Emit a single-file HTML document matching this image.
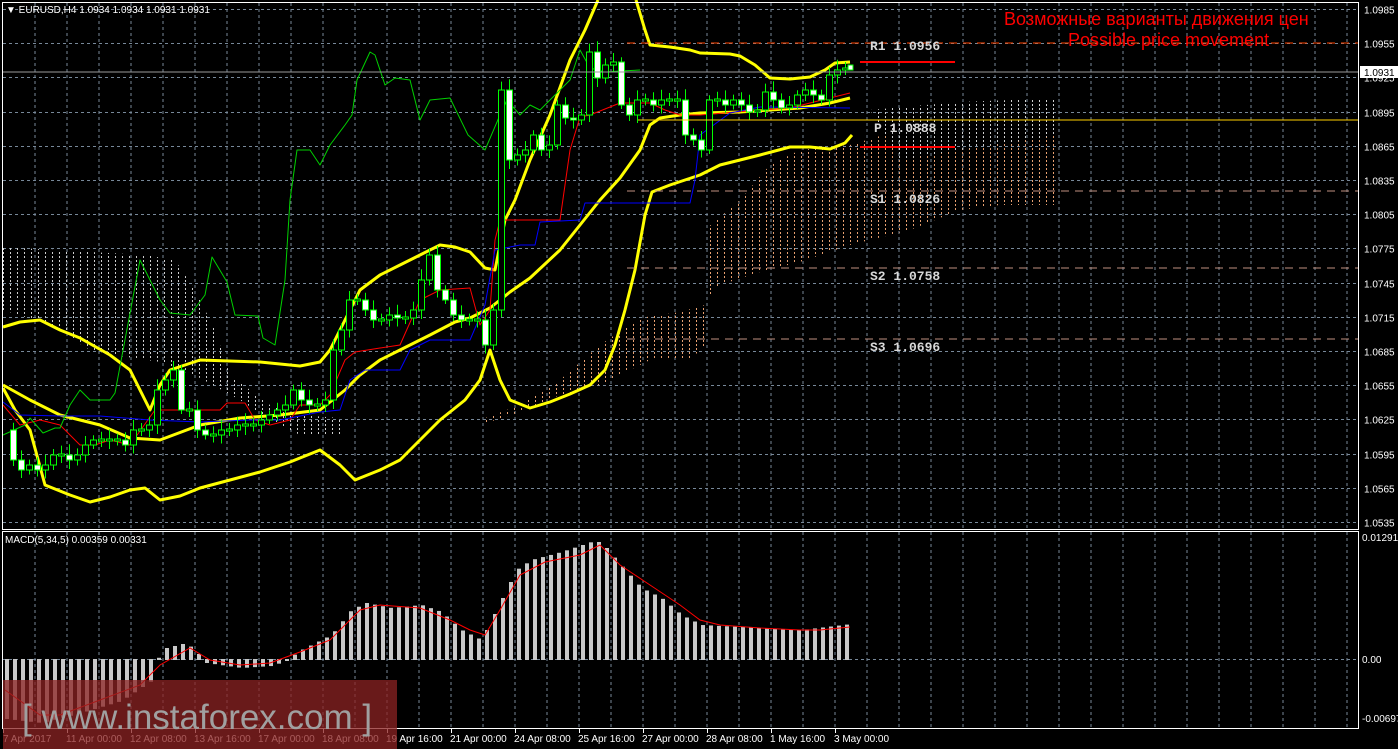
<!DOCTYPE html>
<html><head><meta charset="utf-8"><style>
html,body{margin:0;padding:0;background:#000;width:1398px;height:749px;overflow:hidden}
svg{display:block}
</style></head><body>
<svg id="c" width="1398" height="749" xmlns="http://www.w3.org/2000/svg" font-family="Liberation Sans, sans-serif">
<defs>
<pattern id="pw" width="7" height="4" patternUnits="userSpaceOnUse"><rect x="3" y="0" width="1" height="2" fill="#cfcfcf"/></pattern>
<pattern id="ps" width="7" height="4" patternUnits="userSpaceOnUse"><rect x="3" y="0" width="1" height="2" fill="#e8a070"/></pattern>
</defs>
<rect width="1398" height="749" fill="#000"/>
<g id="grid"></g>
<polygon fill="url(#pw)" points="3,247 55,250 145,255 175,260 195,290 215,330 230,375 250,390 270,405 300,415 340,418 345,435 300,435 270,420 240,400 200,378 160,362 120,356 90,350 50,325 3,310"/>
<polygon fill="url(#ps)" points="480,420 520,405 560,380 600,345 640,318 680,312 705,305 705,345 690,360 650,360 600,385 560,395 520,412 480,425"/>
<polygon fill="url(#ps)" points="705,230 740,200 770,165 800,150 850,145 900,130 960,105 1060,100 1060,205 1000,205 960,210 910,230 850,245 800,262 760,272 720,285 705,300"/>
<polygon fill="url(#pw)" points="870,110 960,102 1060,98 1060,135 960,150 900,160"/>
<g id="lines"></g>
<g id="candles"></g>
<line x1="3" y1="72" x2="1358" y2="72" stroke="#9a9a9a" stroke-width="1"/>
<line x1="627" y1="43" x2="1358" y2="43" stroke="#ff4500" stroke-width="1" stroke-dasharray="8,6"/>
<line x1="638" y1="120" x2="1358" y2="120" stroke="#ffd000" stroke-width="1"/>
<line x1="627" y1="191" x2="1358" y2="191" stroke="#c09080" stroke-width="1" stroke-dasharray="8,6"/>
<line x1="627" y1="268" x2="1358" y2="268" stroke="#c09080" stroke-width="1" stroke-dasharray="8,6"/>
<line x1="627" y1="339" x2="1358" y2="339" stroke="#c09080" stroke-width="1" stroke-dasharray="8,6"/>
<line x1="860" y1="62" x2="955" y2="62" stroke="#ff0000" stroke-width="2"/>
<line x1="860" y1="147" x2="955" y2="147" stroke="#ff0000" stroke-width="2"/>
<g style="font-family:'Liberation Mono',monospace;font-weight:bold;font-size:13px" fill="#d8d8d8">
<text x="870" y="50">R1 1.0956</text>
<text x="874" y="132">P 1.0888</text>
<text x="870" y="203">S1 1.0826</text>
<text x="870" y="280">S2 1.0758</text>
<text x="870" y="351">S3 1.0696</text>
</g>
<text x="1004" y="25" font-size="18" fill="#ff0000">Возможные варианты движения цен</text>
<text x="1068" y="46" font-size="18" fill="#ff0000">Possible price movement</text>
<rect x="2.5" y="2.5" width="1356" height="527" fill="none" stroke="#fff" stroke-width="1"/>
<rect x="2.5" y="531.5" width="1356" height="197" fill="none" stroke="#fff" stroke-width="1"/>
<g id="axis" font-size="10" fill="#fff"></g>
<rect x="1360" y="66" width="38" height="12" fill="#fff"/>
<text x="1364" y="76" font-size="10" fill="#000">1.0931</text>
<text x="6" y="13" font-size="10" fill="#fff">▼ EURUSD,H4  1.0934 1.0934 1.0931 1.0931</text>
<text x="5" y="543" font-size="10" fill="#fff">MACD(5,34,5) 0.00359 0.00331</text>
<g id="macd"></g>
<rect x="3" y="680" width="394" height="69" fill="rgb(140,35,35)" fill-opacity="0.75"/>
<text x="22" y="729" font-size="35" fill="#a0a0a0">[ www.instaforex.com ]</text>
</svg>
<script>
(function(){
var NS="http://www.w3.org/2000/svg";
function el(p,t,a){var e=document.createElementNS(NS,t);for(var k in a)e.setAttribute(k,a[k]);document.getElementById(p).appendChild(e);return e;}
var x,y,k,t,i;
for(x=35;x<1358;x+=32){el("grid","line",{x1:x,y1:3,x2:x,y2:529,stroke:"#778899","stroke-dasharray":"3,3"});el("grid","line",{x1:x,y1:532,x2:x,y2:728,stroke:"#778899","stroke-dasharray":"3,3"});}
for(k=0;k<16;k++){y=Math.round(9+k*34.2)+.5;el("grid","line",{x1:3,y1:y,x2:1358,y2:y,stroke:"#778899","stroke-dasharray":"3,3"});
 t=el("axis","text",{x:1364,y:y+4});t.textContent=(1.0985-k*0.003).toFixed(4);}
el("grid","line",{x1:3,y1:659.5,x2:1358,y2:659.5,stroke:"#778899","stroke-dasharray":"3,3"});
[["0.01291",541],["0.00",663],["-0.00697",722]].forEach(function(a){var t=el("axis","text",{x:1362,y:a[1]});t.textContent=a[0];});
var labs=["7 Apr 2017","11 Apr 00:00","12 Apr 08:00","13 Apr 16:00","17 Apr 00:00","18 Apr 08:00","19 Apr 16:00","21 Apr 00:00","24 Apr 08:00","25 Apr 16:00","27 Apr 00:00","28 Apr 08:00","1 May 16:00","3 May 00:00"];
labs.forEach(function(s,i){var t=el("axis","text",{x:i==0?3:66+(i-1)*64,y:742});t.textContent=s;var lx=(i==0?3:67+(i-1)*64)+.5;el("axis","line",{x1:lx,y1:728,x2:lx,y2:733,stroke:"#fff"});});
function pl(pts,col,w){el("lines","polyline",{points:pts,fill:"none",stroke:col,"stroke-width":w,"stroke-linejoin":"round"});}
var Y="#ffff00";
pl("3,327 20,322 40,320 60,330 80,338 110,355 130,370 145,400 150,410 160,385 170,370 200,360 260,362 300,366 320,362 330,350 345,320 360,290 380,275 400,265 420,255 440,245 455,247 470,252 485,268 495,270 505,220 515,200 530,160 550,115 570,60 585,30 598,0",Y,3);
pl("636,0 645,30 650,45 670,47 690,50 700,53 730,54 740,56 755,65 770,78 790,79 810,77 825,70 835,63 850,62",Y,3);
pl("3,385 30,400 60,415 100,425 130,438 160,440 200,425 240,418 280,415 320,410 345,390 360,375 380,360 400,350 430,335 455,322 470,318 490,308 510,292 530,278 560,250 580,225 600,200 620,178 640,150 650,125 660,118 680,115 700,113 740,112 770,110 800,108 830,103 850,98",Y,3);
pl("3,388 15,410 30,430 45,485 70,495 90,502 110,497 130,490 145,488 160,500 180,496 200,488 230,480 260,472 290,462 320,450 340,465 355,480 380,470 400,460 420,440 440,420 465,400 480,380 490,350 500,380 510,400 530,408 550,402 570,394 590,385 605,370 615,345 625,310 635,270 645,215 652,192 670,185 700,175 720,165 760,155 790,147 810,147 830,149 845,143 852,135",Y,3);
pl("3,405 20,425 40,420 60,425 70,435 80,445 95,445 110,440 130,445 155,410 180,410 220,410 227,403 245,403 255,420 270,425 290,420 300,405 320,405 330,395 345,360 355,352 380,348 400,345 420,300 440,290 470,288 480,325 490,310 495,240 500,220 560,220 570,150 580,117 590,115 620,103 650,103 665,110 680,115 700,115 760,110 790,108 810,103 850,93","#ff0000",1);
pl("3,402 20,415 60,416 100,416 150,420 200,422 250,420 280,420 320,412 340,410 350,380 365,370 400,370 410,350 430,340 470,340 485,305 495,250 520,245 535,245 540,222 580,220 585,203 690,203 695,180 700,135 730,113 760,107 850,108","#0000ff",1);
pl("3,435 25,425 30,418 43,433 55,428 60,428 70,405 80,390 90,400 110,400 115,393 140,260 160,300 170,313 190,315 205,295 212,257 227,282 235,315 258,316 263,338 275,345 285,280 290,200 297,150 310,150 320,165 330,145 345,125 352,115 357,80 370,52 375,55 385,85 395,78 410,80 420,120 430,100 450,98 468,135 485,150 500,115 507,100 520,115 530,105 540,110 555,95 570,80 580,50 590,68 605,72 620,71 640,70","#00d000",1);
var C=[[5,430],[13,460],[21,470],[29,465],[37,470],[45,465],[53,455],[61,455],[69,460],[77,455],[85,445],[93,440],[101,440],[109,440],[117,440],[125,445],[133,430],[141,430],[149,425],[157,390],[165,380],[173,370],[181,410],[189,410],[197,430],[205,435],[213,435],[221,430],[229,430],[237,425],[245,425],[253,425],[261,420],[269,415],[277,410],[285,405],[293,390],[301,400],[309,405],[317,405],[325,400],[333,350],[341,330],[349,300],[357,300],[365,310],[373,320],[381,320],[389,315],[397,318],[405,318],[413,310],[421,280],[429,255],[437,290],[445,300],[453,315],[461,320],[469,320],[477,320],[485,345],[493,310],[501,90],[509,160],[517,155],[525,150],[533,135],[541,150],[549,145],[557,105],[565,118],[573,120],[581,115],[589,52],[597,78],[605,65],[613,62],[621,105],[629,115],[637,100],[645,100],[653,105],[661,100],[669,100],[677,100],[685,135],[693,140],[701,150],[709,100],[717,100],[725,105],[733,100],[741,105],[749,112],[757,110],[765,92],[773,100],[781,108],[789,105],[797,95],[805,90],[813,95],[821,100],[829,75],[837,70],[845,68]];
for(i=1;i<C.length;i++){var cx=C[i][0],o=C[i-1][1],c=C[i][1];var tp=Math.min(o,c),bt=Math.max(o,c);if(bt-tp<2){tp-=1;bt+=1;}
 var h=8+((i*37)%11);el("candles","line",{x1:cx+.5,y1:tp-h*0.6,x2:cx+.5,y2:bt+h*0.5,stroke:"#00ff00"});
 el("candles","rect",{x:cx-2.5,y:tp,width:6,height:bt-tp,fill:c>o?"#fff":"#000",stroke:"#00ff00","stroke-width":1});}
el("candles","rect",{x:848,y:65,width:5,height:5,fill:"#fff",stroke:"#00ff00"});
function interp(k,x){for(var i=1;i<k.length;i++)if(x<=k[i][0]){var a=k[i-1],b=k[i];return a[1]+(b[1]-a[1])*(x-a[0])/(b[0]-a[0]);}return k[k.length-1][1];}
var MB=[[5,718],[40,722],[80,712],[120,700],[150,680],[156,659],[165,648],[185,643],[195,652],[205,662],[240,667],[270,665],[285,660],[300,650],[330,635],[350,610],[365,603],[390,608],[420,605],[440,612],[460,630],[480,640],[490,620],[500,600],[515,570],[530,560],[560,552],[590,542],[600,542],[615,560],[640,588],[660,598],[680,615],[700,625],[760,628],[800,630],[850,624]];
for(x=5;x<=851;x+=8){var v=interp(MB,x);el("macd","rect",{x:x,y:Math.min(v,659),width:4,height:Math.abs(v-659)+1,fill:"#c8c8c8"});}
el("macd","polyline",{points:"5,690 40,715 60,715 100,700 140,685 160,665 190,648 210,660 240,665 270,663 300,652 330,640 360,610 380,605 420,608 450,620 470,630 485,635 500,610 520,575 545,562 580,555 600,545 620,565 650,585 680,605 700,620 720,625 760,628 800,630 820,630 850,627",fill:"none",stroke:"#ff0000","stroke-width":1});
})();
</script>
</body></html>
